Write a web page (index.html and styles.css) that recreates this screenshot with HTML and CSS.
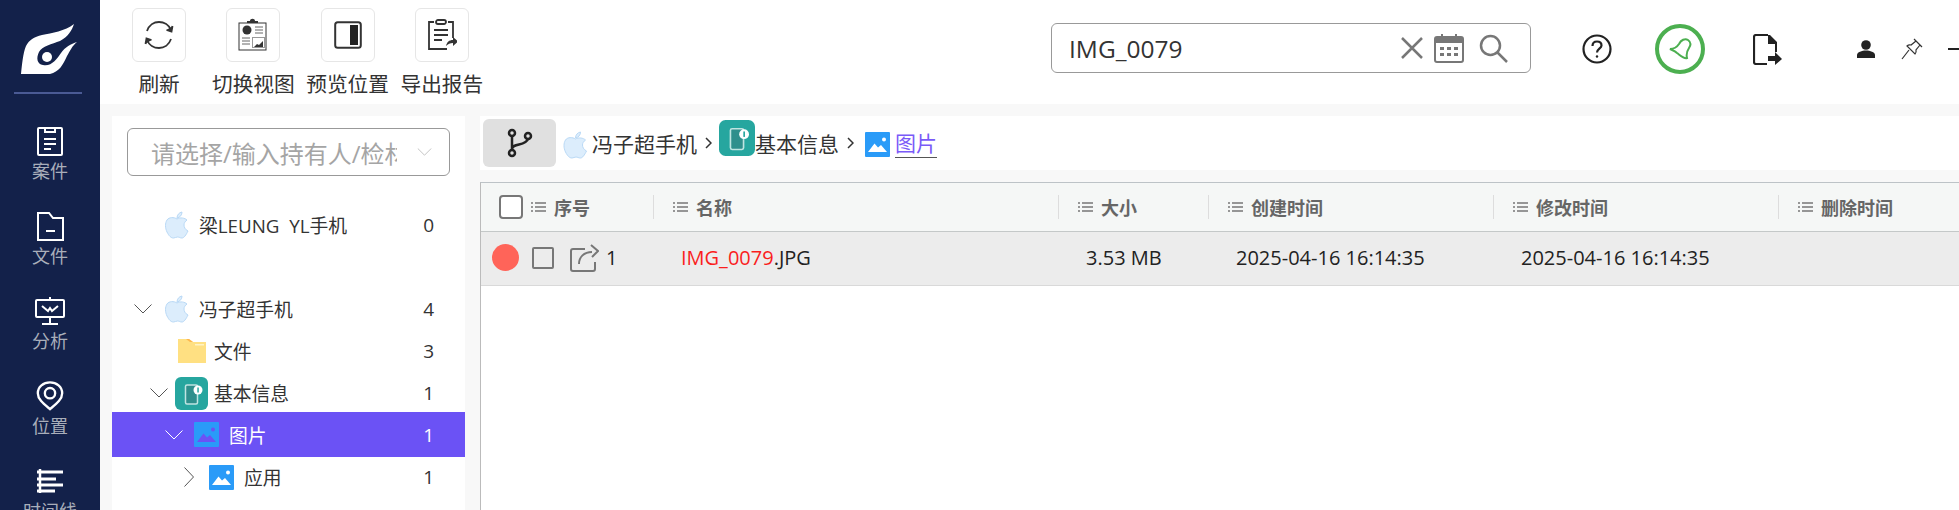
FILE: index.html
```html
<!DOCTYPE html>
<html lang="zh-CN">
<head>
  <meta charset="UTF-8">
  <title>IMG_0079</title>
  <link rel="stylesheet" href="styles.css">
</head>
<body>
<svg class="defs" width="0" height="0">
  <symbol id="apple" viewBox="0 0 24 28">
    <path d="M12 8C9 6 4 6 2 9C0 12 0 17 2 21C4 25 6 27 8.500 27C10 27 11 26 12.500 26C14 26 15 27 17 27C19 27 21 24 23 20C20 18.500 19 16 19 14C19 12 20 10.500 22 9C20 7 15 6 12 8Z" fill="#dcedfc" stroke="#b9d9f6" stroke-width="1"/>
    <path d="M12 7C12 4 14 1.500 17 1C17 4 15 6.500 12 7Z" fill="#dcedfc" stroke="#b9d9f6" stroke-width="1"/>
  </symbol>
  <symbol id="phone" viewBox="0 0 33 33">
    <rect width="33" height="33" rx="6" fill="#26a69f"/>
    <rect x="10.500" y="8" width="12" height="19" rx="1.500" fill="#2f8f8c" stroke="#bfe4e1" stroke-width="1.500"/>
    <circle cx="23" cy="13" r="4.500" fill="#fff"/>
    <rect x="22.300" y="10.500" width="1.500" height="5" fill="#26a69f"/>
  </symbol>
  <symbol id="picture" viewBox="0 0 25 25">
    <rect width="25" height="25" rx="1" fill="#2a9bf8"/>
    <path d="M3 20L9.500 11.500L13 15.500L16 13L22 20Z" fill="#fff"/>
    <circle cx="19" cy="7.500" r="2" fill="#fff"/>
  </symbol>
  <symbol id="picture-on" viewBox="0 0 25 25">
    <rect width="25" height="25" rx="1" fill="#2a9bf8"/>
    <path d="M3 20L9.500 11.500L13 15.500L16 13L22 20Z" fill="#6b52f5"/>
    <circle cx="19" cy="7.500" r="2" fill="#6b52f5"/>
  </symbol>
  <symbol id="lines" viewBox="0 0 15 12">
    <path d="M4 2H15M4 6H15M4 10H15" stroke="#777" stroke-width="1.500"/>
    <path d="M0 2H2M0 6H2M0 10H2" stroke="#777" stroke-width="1.500"/>
  </symbol>
  <symbol id="caret-down" viewBox="0 0 18 10">
    <path d="M.5 .5L9 9L17.500 .5" fill="none" stroke="currentColor" stroke-width="1"/>
  </symbol>
  <symbol id="caret-small" viewBox="0 0 7 12">
    <path d="M1 1L6 6L1 11" fill="none" stroke="#333" stroke-width="1.500"/>
  </symbol>
</svg>

<div class="app">
  <aside class="sidebar">
    <div class="logo-box">
      <svg class="logo" width="80" height="85" viewBox="0 0 80 85">
        <path d="M11 59C12 50 13 38 16 31C19 25 24 22 32 20C42 18 55 16 64 9C62 15 58 22 50 26C42 29 32 31 29 37C26 43 27 49 33 50C41 52 47 44 51 38C55 32 61 29 67 27C62 31 60 36 57 41C53 50 49 57 40 59Z" fill="#fff"/>
        <circle cx="37" cy="42" r="5" fill="#fff"/>
      </svg>
    </div>
    <nav class="nav">
      <div class="nav-item">
        <svg width="30" height="30" viewBox="0 0 30 30" fill="none" stroke="#fff" stroke-width="2">
          <path d="M10 2H4C3.500 2 3 2.500 3 3V28C3 28.500 3.500 29 4 29H26C26.500 29 27 28.500 27 28V3C27 2.500 26.500 2 26 2H20M10 2V6H20V2M10 2H20M9 13H21M9 18H21M9 23H16"/>
        </svg>
        <span>案件</span>
      </div>
      <div class="nav-item">
        <svg width="30" height="30" viewBox="0 0 30 30" fill="none" stroke="#fff" stroke-width="2">
          <path d="M3 2H14L18 7H28V29H3ZM11 20H20"/>
        </svg>
        <span>文件</span>
      </div>
      <div class="nav-item">
        <svg width="32" height="30" viewBox="0 0 32 30" fill="none" stroke="#fff" stroke-width="2">
          <path d="M3 4H29C30 4 30 5 30 5V20C30 21 29 21 29 21H3C2 21 2 20 2 20V5C2 4 3 4 3 4ZM16 1V4M16 21V28M8 28H24M8 10L14 15L16 12L18 15L24 10"/>
        </svg>
        <span>分析</span>
      </div>
      <div class="nav-item">
        <svg width="30" height="32" viewBox="0 0 30 32" fill="none" stroke="#fff" stroke-width="2.500">
          <path d="M15 30C9 25 2 20 2 13C2 6 8 1.500 15 1.500C22 1.500 28 6 28 13C28 20 21 25 15 30Z"/>
          <circle cx="15" cy="13" r="5.500"/>
        </svg>
        <span>位置</span>
      </div>
      <div class="nav-item">
        <svg width="30" height="30" viewBox="0 0 30 30" fill="none" stroke="#fff" stroke-width="3">
          <path d="M5 3V27" stroke-width="2.500"/>
          <path d="M2 6H28M2 13H21M2 19H28M2 25H20"/>
        </svg>
        <span>时间线</span>
      </div>
    </nav>
  </aside>

  <div class="content">
    <header class="topbar">
      <div class="tools">
        <div class="tool">
          <div class="tool-btn">
            <svg width="30" height="30" viewBox="0 0 30 30" fill="none" stroke="#333" stroke-width="1.800">
              <path d="M3 11C5 5 10 2 15 2C20 2 25 5 27 10"/>
              <path d="M27 19C25 25 20 28 15 28C10 28 5 25 3 20"/>
              <path d="M22.500 10L27.500 11.500L28.500 6" fill="#333"/>
              <path d="M7.500 20L2.500 18.500L1.500 24" fill="#333"/>
            </svg>
          </div>
          <span>刷新</span>
        </div>
        <div class="tool">
          <div class="tool-btn">
            <svg width="30" height="34" viewBox="0 0 30 34">
              <rect x="1" y="5" width="27" height="27" fill="#fff" stroke="#333"/>
              <path d="M9 5V3H12C12 0 17 0 17 3H20V5Z" fill="#333"/>
              <circle cx="9" cy="12" r="4.500" fill="#333"/>
              <path d="M17 9H25M17 12H25M17 15H25M4 20H12M4 23H12M4 26H12" stroke="#666"/>
              <rect x="14.500" y="19.500" width="12" height="10" fill="#fff" stroke="#999"/>
              <path d="M16 29L19 26L21 27L25 23V29Z" fill="#333"/>
            </svg>
          </div>
          <span>切换视图</span>
        </div>
        <div class="tool">
          <div class="tool-btn">
            <svg width="28" height="28" viewBox="0 0 28 28">
              <rect x="1.200" y="1.200" width="25.600" height="25.600" rx="2.500" fill="#fff" stroke="#333" stroke-width="2"/>
              <rect x="16" y="4" width="8" height="20" fill="#222"/>
            </svg>
          </div>
          <span>预览位置</span>
        </div>
        <div class="tool">
          <div class="tool-btn">
            <svg width="30" height="32" viewBox="0 0 30 32" fill="none" stroke="#333" stroke-width="1.800">
              <path d="M7 3H2V30H20M21 3H26V19"/>
              <rect x="9" y="1" width="10" height="4" rx="2"/>
              <path d="M7 11H21M7 16H21M7 21H15"/>
              <path d="M19 27C20 23 22 21 26 21V18L31 22.500L26 27V24C23 24 21 25 19 27Z" fill="#333" stroke="none"/>
            </svg>
          </div>
          <span>导出报告</span>
        </div>
      </div>

      <div class="search">
        <span class="search-text">IMG_0079</span>
        <svg width="22" height="22" viewBox="0 0 22 22" fill="none" stroke="#777" stroke-width="2.500">
          <path d="M1 1L21 21M21 1L1 21"/>
        </svg>
        <svg width="30" height="29" viewBox="0 0 30 29">
          <rect x="1" y="3" width="28" height="25" rx="2" fill="#fff" stroke="#777" stroke-width="2"/>
          <path d="M1 3H29V9H1ZM7 0H9V4H7ZM21 0H23V4H21Z" fill="#777"/>
          <path d="M6 13H10V16H6ZM13 13H17V16H13ZM20 13H24V16H20ZM6 19H10V22H6ZM13 19H17V22H13ZM20 19H24V22H20Z" fill="#777"/>
        </svg>
        <svg class="search-glass" width="29" height="29" viewBox="0 0 29 29" fill="none" stroke="#777" stroke-width="2.500">
          <circle cx="11.500" cy="11.500" r="9.500"/>
          <path d="M18.500 18.500L28 28"/>
        </svg>
      </div>

      <div class="actions">
        <svg class="act-help" width="30" height="30" viewBox="0 0 30 30" fill="none" stroke="#222" stroke-width="2.200">
          <circle cx="15" cy="15" r="13.500"/>
          <path d="M10.500 12C10.500 9 12.500 7.500 15 7.500C17.500 7.500 19.500 9 19.500 11.500C19.500 14.500 15 15 15 18.500"/>
          <circle cx="15" cy="22.500" r="1.200" fill="#222" stroke="none"/>
        </svg>
        <div class="bell">
          <svg width="26" height="26" viewBox="0 0 26 26" fill="none" stroke="#4caf50" stroke-width="2">
            <path d="M3 13C7 13 10 11 12 8C14 4 18 2 21 4C24 6 24 9 22 12C20 15 19 18 20 22C17 23 14 20 10 17C8 15 5 14 3 13Z"/>
          </svg>
        </div>
        <svg class="act-export" width="29" height="31" viewBox="0 0 29 31">
          <path d="M15 1H3C2 1 1 2 1 3V28C1 29 2 30 3 30H14" fill="none" stroke="#222" stroke-width="2.200"/>
          <path d="M15 1H17L24 8V18H22V10H15Z" fill="#222"/>
          <path d="M15 22H22V18L29 25L22 31V27H15Z" fill="#222"/>
        </svg>
        <svg class="act-user" width="18" height="18" viewBox="0 0 18 18">
          <circle cx="9" cy="5" r="4.800" fill="#222"/>
          <path d="M0 18V15C0 12 5 10.500 9 10.500C13 10.500 18 12 18 15V18Z" fill="#222"/>
        </svg>
        <svg class="act-pin" width="22" height="22" viewBox="0 0 22 22" fill="none" stroke="#333" stroke-width="1.200">
          <path d="M13 1L21 9M15 3L10 7C8 6.500 7 7 6 8L14 16C15 15 15.500 14 15 12L19 7M8 12L1 21"/>
        </svg>
        <div class="minimize"></div>
      </div>
    </header>

    <div class="workspace">
      <section class="tree-panel">
        <div class="select">
          <span class="select-text">请选择/输入持有人/检材</span>
          <svg class="select-arrow" width="15" height="8" viewBox="0 0 18 10"><use href="#caret-down"/></svg>
        </div>
        <div class="tree">
          <div class="tree-row lvl0">
            <span class="caret"></span>
            <svg class="ic" width="24" height="28"><use href="#apple"/></svg>
            <span class="tree-label">梁LEUNG&nbsp; YL手机</span>
            <span class="tree-count">0</span>
          </div>
          <div class="tree-row lvl0 spaced">
            <span class="caret"><svg width="18" height="10"><use href="#caret-down"/></svg></span>
            <svg class="ic" width="24" height="28"><use href="#apple"/></svg>
            <span class="tree-label">冯子超手机</span>
            <span class="tree-count">4</span>
          </div>
          <div class="tree-row lvl1">
            <span class="caret"></span>
            <svg class="ic-wide" width="33" height="26" viewBox="0 0 33 26">
              <path d="M3 1H14L18 4H31V25H3Z" fill="#ffe082"/>
              <path d="M11 1H14L18 4H15Z" fill="#ffb74d"/>
              <path d="M20 6H29V7.500H20Z" fill="#fff3c4"/>
            </svg>
            <span class="tree-label">文件</span>
            <span class="tree-count">3</span>
          </div>
          <div class="tree-row lvl1">
            <span class="caret"><svg width="18" height="10"><use href="#caret-down"/></svg></span>
            <svg class="ic-wide" width="33" height="33"><use href="#phone"/></svg>
            <span class="tree-label">基本信息</span>
            <span class="tree-count">1</span>
          </div>
          <div class="tree-row lvl2 selected">
            <span class="caret"><svg width="18" height="10"><use href="#caret-down"/></svg></span>
            <svg class="ic-pic" width="25" height="25"><use href="#picture-on"/></svg>
            <span class="tree-label">图片</span>
            <span class="tree-count">1</span>
          </div>
          <div class="tree-row lvl3">
            <span class="caret"><svg width="10" height="20" viewBox="0 0 10 20"><path d="M.5 .5L9.500 10L.5 19.500" fill="none" stroke="currentColor"/></svg></span>
            <svg class="ic-pic" width="25" height="25"><use href="#picture"/></svg>
            <span class="tree-label">应用</span>
            <span class="tree-count">1</span>
          </div>
        </div>
      </section>

      <section class="main">
        <div class="crumbs">
          <div class="branch-btn">
            <svg width="26" height="30" viewBox="0 0 26 30" fill="none" stroke="#222" stroke-width="2.500">
              <circle cx="5" cy="5" r="3"/>
              <circle cx="5" cy="25" r="3"/>
              <circle cx="21" cy="8" r="3"/>
              <path d="M5 8V22M5 21C5 15 19 18 21 11"/>
            </svg>
          </div>
          <svg class="crumb-apple" width="25" height="28"><use href="#apple"/></svg>
          <span class="crumb">冯子超手机</span>
          <svg class="crumb-sep" width="7" height="12"><use href="#caret-small"/></svg>
          <svg class="crumb-phone" width="36" height="36" viewBox="0 0 33 33"><use href="#phone"/></svg>
          <span class="crumb">基本信息</span>
          <svg class="crumb-sep sep-last" width="7" height="12"><use href="#caret-small"/></svg>
          <svg class="crumb-pic" width="25" height="25"><use href="#picture"/></svg>
          <span class="crumb crumb-on">图片</span>
        </div>

        <div class="table">
          <div class="thead">
            <div class="th first">
              <span class="check-head"></span>
              <svg width="15" height="12"><use href="#lines"/></svg>序号
            </div>
            <div class="th"><svg width="15" height="12"><use href="#lines"/></svg>名称</div>
            <div class="th"><svg width="15" height="12"><use href="#lines"/></svg>大小</div>
            <div class="th"><svg width="15" height="12"><use href="#lines"/></svg>创建时间</div>
            <div class="th"><svg width="15" height="12"><use href="#lines"/></svg>修改时间</div>
            <div class="th"><svg width="15" height="12"><use href="#lines"/></svg>删除时间</div>
          </div>
          <div class="trow">
            <div class="td first">
              <span class="dot"></span>
              <span class="check"></span>
              <svg class="share" width="29" height="28" viewBox="0 0 29 28" fill="none" stroke="#777" stroke-width="2">
                <path d="M15 5H3C2 5 1 6 1 7V25C1 26 2 27 3 27H23C24 27 25 26 25 25V18"/>
                <path d="M9 20C9 13 14 8 22 8M21 1L28 7L22 13"/>
              </svg>
              <span>1</span>
            </div>
            <div class="td name"><span class="hit">IMG_0079</span>.JPG</div>
            <div class="td">3.53 MB</div>
            <div class="td">2025-04-16 16:14:35</div>
            <div class="td">2025-04-16 16:14:35</div>
            <div class="td"></div>
          </div>
        </div>
      </section>
    </div>
  </div>
</div>
</body>
</html>
```

FILE: styles.css
```css
* {
  box-sizing: border-box;
}
html, body {
  margin: 0;
  height: 100%;
  overflow: hidden;
}
body {
  font-family: "Open Sans", "Noto Sans CJK SC", sans-serif;
  color: #333;
  background-color: #f8f8f8;
}
.defs {
  position: absolute;
}
.app {
  display: flex;
  height: 510px;
}

/* sidebar */
.sidebar {
  width: 100px;
  flex-shrink: 0;
  background-color: #13214a;
  overflow: hidden;
}
.logo-box {
  height: 94px;
  padding: 15px 10px 0;
}
.logo {
  display: block;
}
.logo-box::after {
  content: "";
  display: block;
  width: 68px;
  height: 2px;
  margin: -8px 0 0 4px;
  background-color: #4a5a94;
}
.nav {
  padding-top: 32px;
}
.nav-item {
  height: 85px;
  display: flex;
  flex-direction: column;
  align-items: center;
  color: #a9aeba;
  font-size: 18px;
  line-height: 22px;
}
.nav-item svg {
  height: 30px;
  flex-shrink: 0;
  margin-bottom: 4px;
}

/* top bar */
.content {
  flex: 1;
  min-width: 0;
  display: flex;
  flex-direction: column;
}
.topbar {
  height: 104px;
  flex-shrink: 0;
  background-color: #fff;
  display: flex;
  padding-left: 12px;
}
.tools {
  display: flex;
  width: 377px;
  padding-top: 8px;
}
.tool {
  width: 94.300px;
  display: flex;
  flex-direction: column;
  align-items: center;
  font-size: 20.700px;
  line-height: 28px;
  white-space: nowrap;
}
.tool-btn {
  width: 54px;
  height: 54px;
  margin-bottom: 8px;
  border: 1px solid #e6e6e6;
  border-radius: 6px;
  display: flex;
  align-items: center;
  justify-content: center;
}
.search {
  width: 480px;
  height: 50px;
  margin: 23px 0 0 562px;
  padding: 0 22px 0 17px;
  border: 1px solid #999;
  border-radius: 6px;
  display: flex;
  align-items: center;
}
.search-text {
  flex: 1;
  font-size: 24.500px;
  color: #333;
}
.search svg + svg {
  margin-left: 11px;
}
.search .search-glass {
  margin-left: 15px;
}
.actions {
  flex: 1;
  display: flex;
  align-items: center;
  padding-bottom: 6px;
  overflow: hidden;
}
.act-help {
  margin-left: 51px;
  flex-shrink: 0;
}
.bell {
  width: 50px;
  height: 50px;
  flex-shrink: 0;
  margin-left: 43px;
  border: 4px solid #4caf50;
  border-radius: 50%;
  display: flex;
  align-items: center;
  justify-content: center;
}
.act-export {
  margin-left: 48px;
  flex-shrink: 0;
}
.act-user {
  margin-left: 75px;
  flex-shrink: 0;
}
.act-pin {
  margin-left: 26px;
  flex-shrink: 0;
}
.minimize {
  width: 13px;
  height: 2px;
  margin-left: 25px;
  flex-shrink: 0;
  background-color: #222;
}

/* tree */
.workspace {
  flex: 1;
  min-height: 0;
  display: flex;
  padding: 12px 0 0 12px;
}
.tree-panel {
  width: 353px;
  flex-shrink: 0;
  background-color: #fff;
  padding-top: 12px;
}
.select {
  width: 323px;
  height: 48px;
  margin-left: 15px;
  padding-left: 23px;
  border: 1px solid #999;
  border-radius: 6px;
  display: flex;
  align-items: center;
  font-size: 24px;
  color: #a5a5a5;
}
.select-text {
  width: 246px;
  overflow: hidden;
  white-space: nowrap;
}
.select-arrow {
  margin-left: 20px;
  flex-shrink: 0;
  color: #b5b5b5;
}
.tree {
  padding-top: 28px;
}
.tree-row {
  height: 42px;
  padding-right: 31px;
  display: flex;
  align-items: center;
  font-size: 18.800px;
  color: #333;
}
.tree-row.spaced {
  margin-top: 42px;
}
.tree-row.selected {
  height: 45px;
  margin: -2px 0 -1px;
  background-color: #6b52f5;
  color: #fff;
}
.lvl0 {
  padding-left: 22px;
}
.lvl1 {
  padding-left: 38px;
}
.lvl2 {
  padding-left: 53px;
}
.lvl3 {
  padding-left: 72px;
}
.caret {
  display: flex;
  align-items: center;
  color: #555;
}
.selected .caret {
  color: #fff;
}
.lvl0 .caret {
  width: 31px;
}
.lvl1 .caret {
  width: 25px;
}
.lvl2 .caret {
  width: 29px;
}
.lvl3 .caret {
  width: 25px;
}
.ic {
  margin-right: 10px;
  flex-shrink: 0;
}
.ic-wide {
  margin-right: 6px;
  flex-shrink: 0;
}
.ic-pic {
  margin-right: 10px;
  flex-shrink: 0;
}
.tree-label {
  flex: 1;
  white-space: nowrap;
}
.tree-count {
  font-size: 19px;
}

/* breadcrumb + table */
.main {
  flex: 1;
  min-width: 0;
  margin-left: 15px;
}
.crumbs {
  height: 54px;
  background-color: #fff;
  padding-left: 3px;
  display: flex;
  align-items: center;
  font-size: 21px;
  white-space: nowrap;
}
.branch-btn {
  width: 73px;
  height: 48px;
  background-color: #e0e0e0;
  border-radius: 6px;
  display: flex;
  align-items: center;
  justify-content: center;
}
.crumb-apple {
  margin: 3px 4px 0 7px;
}
.crumb-sep {
  margin: 0 7px 0 8px;
}
.sep-last {
  margin: 0 11px 0 8px;
}
.crumb-phone {
  margin: 0 0 10px 0;
}
.crumb-pic {
  margin: 3px 5px 0 0;
}
.crumb-on {
  color: #7a5af8;
  border-bottom: 1px solid #555;
  line-height: 28px;
}
.table {
  margin-top: 12px;
  height: 340px;
  background-color: #fff;
  border-left: 1px solid #bbb;
  border-top: 1px solid #bdc3c7;
}
.thead,
.trow {
  display: grid;
  grid-template-columns: 172px 405px 150px 285px 285px 1fr;
}
.thead {
  height: 49px;
  background-color: #f5f7f6;
  border-bottom: 1px solid #c4c8c8;
  align-items: center;
  font-size: 18px;
  font-weight: 700;
  color: #666;
}
.th {
  height: 24px;
  padding-left: 19px;
  display: flex;
  align-items: center;
  white-space: nowrap;
}
.th + .th {
  border-left: 1px solid #ddd;
}
.th svg {
  margin-right: 8px;
}
.th.first {
  padding-left: 18px;
}
.check-head {
  width: 24px;
  height: 24px;
  margin-right: 8px;
  background-color: #fff;
  border: 2px solid #777;
  border-radius: 4px;
}
.trow {
  height: 54px;
  padding-bottom: 2px;
  background-color: #ececec;
  border-bottom: 1px solid #d9d9d9;
  align-items: center;
  font-size: 20px;
  color: #222;
}
.td {
  padding-left: 28px;
  white-space: nowrap;
}
.td.first {
  padding-left: 11px;
  display: flex;
  align-items: center;
}
.dot {
  width: 27px;
  height: 27px;
  border-radius: 50%;
  background-color: #ff6459;
}
.check {
  width: 22px;
  height: 22px;
  margin-left: 13px;
  border: 2px solid #777;
  border-radius: 2px;
}
.share {
  margin: 0 7px 0 16px;
}
.hit {
  color: #fa1e1e;
}
```
